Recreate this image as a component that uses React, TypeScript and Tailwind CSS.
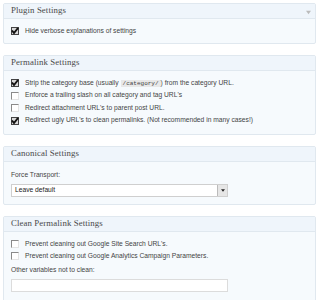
import React from 'react';

const sans = { fontFamily: '"Liberation Sans", Arial, sans-serif' };
const serif = { fontFamily: '"Liberation Serif", "DejaVu Serif", serif' };

function Box({ checked }: { checked?: boolean }) {
    if (checked) {
        return (
            <span className="relative inline-block w-[8px] h-[8px] border border-[#444] bg-[#d8d8d8] shrink-0">
                <svg viewBox="0 0 8 8" className="absolute -left-px -top-px w-[8px] h-[8px]">
                    <path d="M1 3.5 L3 6 L7 1" fill="none" stroke="#111" strokeWidth="2" />
                </svg>
            </span>
        );
    }
    return <span className="inline-block w-[8px] h-[8px] border-t border-l border-[#8a8a8a] border-r border-b border-r-[#e4e4e4] border-b-[#e4e4e4] bg-white shrink-0" />;
}

function Row({ checked, children }: { checked?: boolean; children: React.ReactNode }) {
    return (
        <div className="flex items-center gap-[6px] h-[12px] text-[6.7px] text-[#444]">
            <Box checked={checked} />
            <span>{children}</span>
        </div>
    );
}

function Panel({ title, children, arrow }: { title: string; children: React.ReactNode; arrow?: boolean }) {
    return (
        <div className="mx-[3px] w-[313px] border border-[#e0e8ef] rounded-[2px] bg-[#f6fafd]">
            <div className="relative h-[15px] border-b border-[#e0e8ef] bg-[#eff5fb] pl-[7px] flex items-center">
                <span className="text-[8.8px] text-[#4a4a4a] tracking-[0.1px]" style={serif}>{title}</span>
                {arrow && (
                    <svg viewBox="0 0 6 6" className="absolute right-[4px] top-[6px] w-[5px] h-[5px]">
                        <path d="M0 1 H6 L3 5 Z" fill="#bbb" />
                    </svg>
                )}
            </div>
            {children}
        </div>
    );
}

export default function App() {
    return (
        <div className="w-[320px] h-[300px] bg-white pt-[3px] flex flex-col gap-[11px] overflow-hidden" style={sans}>
            <Panel title="Plugin Settings" arrow>
                <div className="pl-[7px] pt-[6px] pb-[6px]">
                    <Row checked>Hide verbose explanations of settings</Row>
                </div>
            </Panel>

            <Panel title="Permalink Settings">
                <div className="pl-[7px] pt-[6px] pb-[7px] flex flex-col gap-[0.5px]">
                    <Row checked>
                        Strip the category base (usually{' '}
                        <code className="bg-[#e8e8e8] px-[2px] text-[6px]" style={{ fontFamily: '"Liberation Mono", monospace' }}>/category/</code>
                        ) from the category URL.
                    </Row>
                    <Row>Enforce a trailing slash on all category and tag URL's</Row>
                    <Row>Redirect attachment URL's to parent post URL.</Row>
                    <Row checked>Redirect ugly URL's to clean permalinks. (Not recommended in many cases!)</Row>
                </div>
            </Panel>

            <Panel title="Canonical Settings">
                <div className="pl-[7px] pt-[8px] pb-[7px]">
                    <div className="text-[6.7px] text-[#444] mb-[4px]">Force Transport:</div>
                    <div className="w-[217px] h-[13px] bg-white border border-[#cfcfcf] flex items-center justify-between">
                        <span className="text-[6.7px] text-[#222] pl-[3px]">Leave default</span>
                        <span className="w-[10px] h-[11px] bg-[#e6e6e6] border-l border-[#bbb] flex items-center justify-center">
                            <svg viewBox="0 0 6 4" className="w-[4px] h-[3px]">
                                <path d="M0 0 H6 L3 4 Z" fill="#222" />
                            </svg>
                        </span>
                    </div>
                </div>
            </Panel>

            <Panel title="Clean Permalink Settings">
                <div className="pl-[7px] pt-[6px] pb-[9px]">
                    <Row>Prevent cleaning out Google Site Search URL's.</Row>
                    <Row>Prevent cleaning out Google Analytics Campaign Parameters.</Row>
                    <div className="text-[6.7px] text-[#444] mt-[3px] mb-[4px]">Other variables not to clean:</div>
                    <div className="w-[217px] h-[13px] bg-white border border-[#dcdcdc]" />
                </div>
            </Panel>
        </div>
    );
}
